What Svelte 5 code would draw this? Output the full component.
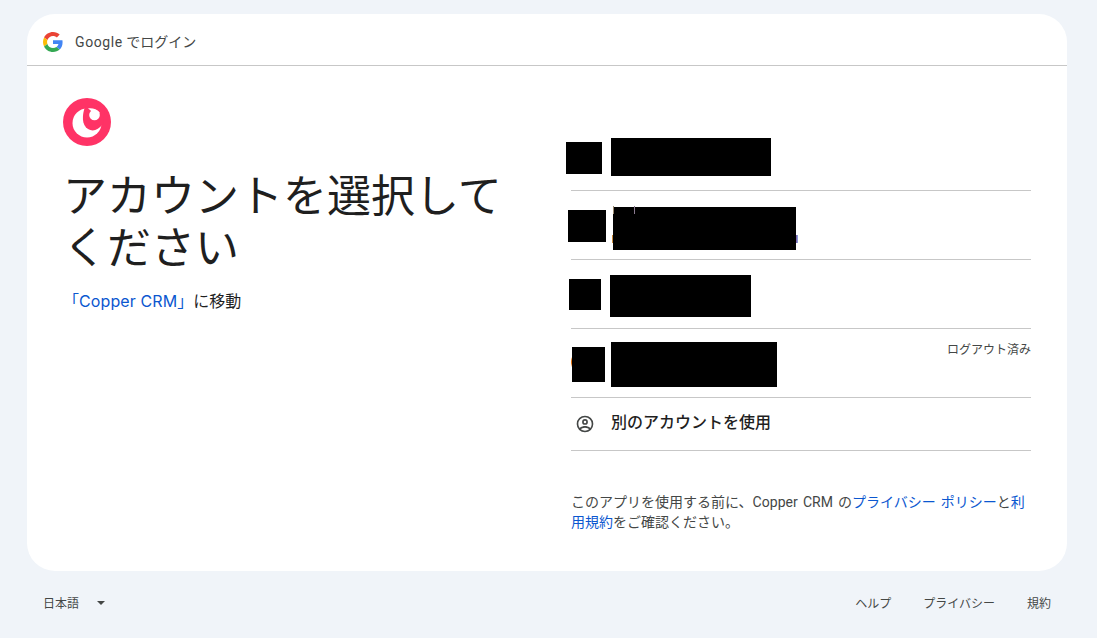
<script>
  const rows = [
    { id: 'a', icon: 'iconA', bar: 'barA' },
    { id: 'b', icon: 'iconB', bar: 'barB' },
    { id: 'c', icon: 'iconC', bar: 'barC' }
  ];
</script>

<div class="page">
  <main class="card">
    <header class="head">
      <svg class="g" viewBox="0 0 48 48" width="20" height="20" aria-hidden="true">
        <path fill="#EA4335" d="M24 9.5c3.54 0 6.71 1.22 9.21 3.6l6.85-6.85C35.9 2.38 30.47 0 24 0 14.62 0 6.51 5.38 2.56 13.22l7.98 6.19C12.43 13.72 17.74 9.5 24 9.5z"/>
        <path fill="#4285F4" d="M46.98 24.55c0-1.57-.15-3.09-.38-4.55H24v9.02h12.94c-.58 2.96-2.26 5.48-4.78 7.18l7.73 6c4.51-4.18 7.09-10.36 7.09-17.65z"/>
        <path fill="#FBBC05" d="M10.53 28.59c-.48-1.45-.76-2.99-.76-4.59s.27-3.14.76-4.59l-7.98-6.19C.92 16.46 0 20.12 0 24c0 3.88.92 7.54 2.56 10.78l7.97-6.19z"/>
        <path fill="#34A853" d="M24 48c6.48 0 11.93-2.13 15.89-5.81l-7.73-6c-2.15 1.45-4.92 2.3-8.16 2.3-6.26 0-11.57-4.22-13.47-9.91l-7.98 6.19C6.51 42.62 14.62 48 24 48z"/>
      </svg>
      <span class="headlabel"><span class="latin">Google</span> でログイン</span>
    </header>

    <div class="body">
      <section class="left">
        <svg class="logo" viewBox="0 0 48 48" width="48" height="48" aria-hidden="true">
          <circle cx="24" cy="24" r="24" fill="#ff3366"/>
          <circle cx="24" cy="25" r="14.500" fill="#fff"/>
          <path fill="#ff3366" d="M22 9C19 17 18.500 27 25 31c5 3 10 1 15-5L42 8z"/>
          <circle cx="31.500" cy="17" r="5.300" fill="#fff"/>
          <path fill="#fff" d="M25 10.500c4-.7 9 .5 12 4.500l-6 2c-1.500-3-3.500-5-6-6.500z"/>
        </svg>
        <h1>アカウントを選択してください</h1>
        <p class="sub"><a href="#top">「<span class="inter">Copper CRM</span>」</a>に移動</p>
      </section>

      <section class="right">
        <ul class="list">
          {#each rows as r}
            <li class="row account {r.id}">
              <span class="mask {r.icon}"></span>
              <span class="mask {r.bar}"></span>
            </li>
          {/each}
          <li class="row account d">
            <span class="mask iconD"></span>
            <span class="mask barD"></span>
            <span class="out">ログアウト済み</span>
          </li>
          <li class="row other">
            <svg viewBox="0 0 24 24" width="20" height="20" aria-hidden="true">
              <path fill="#444746" d="M12 2a10 10 0 1 0 0 20 10 10 0 0 0 0-20zM7.070 18.280c.43-.9 3.050-1.780 4.930-1.780s4.510.88 4.930 1.780A7.900 7.900 0 0 1 12 20a7.900 7.900 0 0 1-4.930-1.720zm11.290-1.450c-1.430-1.740-4.900-2.330-6.360-2.330s-4.930.59-6.360 2.330A7.930 7.930 0 0 1 4 12c0-4.410 3.590-8 8-8s8 3.590 8 8c0 1.820-.62 3.490-1.640 4.830zM12 6a3.500 3.500 0 1 0 0 7 3.500 3.500 0 0 0 0-7zm0 5a1.500 1.500 0 1 1 0-3 1.500 1.500 0 0 1 0 3z"/>
            </svg>
            <span class="otherlabel">別のアカウントを使用</span>
          </li>
        </ul>
        <p class="legal">このアプリを使用する前に、<span class="latin2">Copper CRM</span> の<a href="#top">プライバシー ポリシー</a>と<a href="#top">利用規約</a>をご確認ください。</p>
      </section>
    </div>
  </main>

  <footer class="foot">
    <div class="lang"><span>日本語</span><i class="caret"></i></div>
    <nav class="links"><span>ヘルプ</span><span>プライバシー</span><span>規約</span></nav>
  </footer>
</div>

<style>
  :global(body) {
    margin: 0;
    background: #f0f4f9;
    font-family: "Roboto", "Noto Sans CJK JP", sans-serif;
    color: #1f1f1f;
  }
  .page {
    height: 638px;
    padding: 14px 30px 0 27px;
    box-sizing: border-box;
    display: flex;
    flex-direction: column;
  }
  .card {
    height: 557px;
    background: #fff;
    border-radius: 28px;
    display: flex;
    flex-direction: column;
  }
  .head {
    height: 52px;
    flex: none;
    display: flex;
    align-items: center;
    gap: 12px;
    padding: 4px 0 0 16px;
    box-sizing: border-box;
    border-bottom: 1px solid #c7c7c7;
    font-size: 14px;
    color: #444746;
  }
  .headlabel { margin-top: -2px; }
  .latin { letter-spacing: .6px; }
  .body {
    flex: 1;
    display: flex;
    padding: 32px 36px 0;
  }
  .left { width: 508px; flex: none; }
  .logo { display: block; }
  h1 {
    margin: 25px 0 0;
    width: 440px;
    font-size: 44px;
    line-height: 52px;
    font-weight: 400;
    color: #1f1f1f;
  }
  .sub {
    margin: 16px 0 0;
    font-size: 16px;
    line-height: 20px;
  }
  .inter { font-family: "Inter", "Roboto", sans-serif; letter-spacing: .1px; }
  a { color: #0b57d0; text-decoration: none; }
  .right { flex: 1; }
  .list { list-style: none; margin: 25px 0 0; padding: 0; }
  .row {
    position: relative;
    isolation: isolate;
    display: flex;
    align-items: center;
    box-sizing: border-box;
    border-bottom: 1px solid #c7c7c7;
  }
  .account { height: 69px; }
  .a { height: 68px; }
  .mask { background: #000; display: block; flex: none; }
  .iconA { width: 36px; height: 32px; margin: 2px 9px 0 -5px; }
  .barA { width: 160px; height: 38px; margin-top: 1px; }
  .iconB { width: 38px; height: 32px; margin: 2px 7px 0 -3px; }
  .barB { width: 183px; height: 43px; margin-top: 7px; position: relative; }
  .barB::before {
    content: "";
    position: absolute;
    left: -1px;
    top: 28px;
    width: 1px;
    height: 8px;
    background: #c98a3a;
    box-shadow: 1px -29px 0 0 #9a8a70, 22px -29px 0 0 #8a7a90;
  }
  .barB::after {
    content: "";
    position: absolute;
    right: -2px;
    top: 28px;
    width: 2px;
    height: 8px;
    background: linear-gradient(90deg, #7a4a9a, #8ab4e8);
  }
  .iconC { width: 32px; height: 31px; margin: 0 9px 0 -2px; }
  .barC { width: 141px; height: 42px; margin-top: 4px; }
  .iconD { width: 33px; height: 35px; margin: 2px 6px 0 1px; position: relative; }
  .iconD::before {
    content: "";
    position: absolute;
    left: -1.500px;
    top: 9px;
    width: 5px;
    height: 12px;
    border-radius: 50%;
    background: #e8710a;
    z-index: -1;
  }
  .barD { width: 166px; height: 45px; margin-top: 2px; }
  .out {
    position: absolute;
    right: 0;
    top: 13px;
    font-size: 12px;
    line-height: 16px;
    color: #444746;
  }
  .other {
    height: 53px;
    gap: 16px;
    padding-left: 4px;
  }
  .otherlabel {
    margin-top: -2px;
    font-size: 16px;
    font-weight: 500;
    line-height: 20px;
    color: #1f1f1f;
  }
  .legal {
    margin: 41px 0 0;
    font-size: 14px;
    line-height: 20px;
    color: #444746;
    word-spacing: 1.500px;
  }
  .latin2 { letter-spacing: .05px; }
  .foot {
    flex: 1;
    display: flex;
    justify-content: space-between;
    align-items: center;
    font-size: 12px;
    color: #444746;
    padding: 0 16px 4px;
  }
  .lang { display: flex; align-items: center; gap: 18px; }
  .caret {
    width: 0;
    height: 0;
    border-left: 4px solid transparent;
    border-right: 4px solid transparent;
    border-top: 4px solid #444746;
  }
  .links { display: flex; gap: 32px; }
</style>
